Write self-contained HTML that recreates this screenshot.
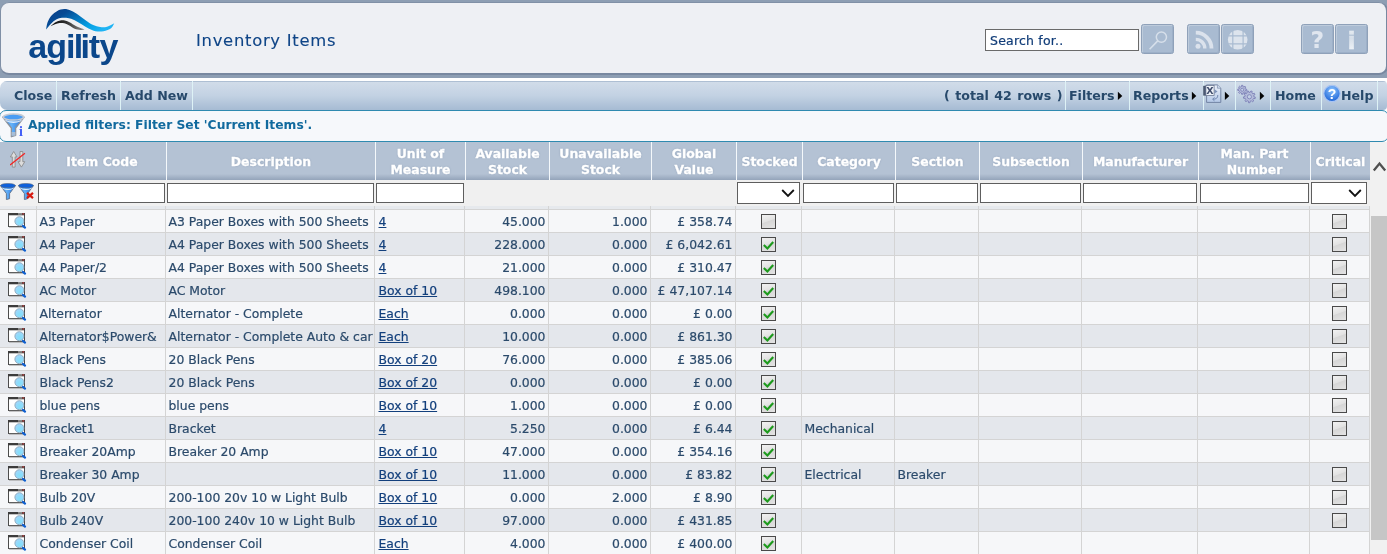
<!DOCTYPE html>
<html><head><meta charset="utf-8"><title>Inventory Items</title>
<style>
*{box-sizing:border-box}
html,body{margin:0;padding:0}
body{width:1387px;height:554px;overflow:hidden;background:#fff;font-family:"DejaVu Sans","Liberation Sans",sans-serif;font-size:12.4px;color:#2b4a6b;position:relative}
#top{position:absolute;left:0;top:0;width:1387px;height:78px;background:#8d9eb3}
#panel{position:absolute;left:0;top:2px;width:1388px;height:73px;background:#eef0f4;border:1px solid #8090a6;border-bottom:2px solid #7888a0;border-right:2px solid #7888a0;border-radius:9px}
#logo{position:absolute;left:0;top:0}
#logotxt{position:absolute;left:28.2px;top:26px;font-family:"Liberation Sans",sans-serif;font-weight:bold;font-size:34px;color:#0b478b;line-height:40px;white-space:nowrap}
#logotxt span{display:inline}
#title{position:absolute;left:196px;top:30px;font-size:16.4px;letter-spacing:.72px;-webkit-text-stroke:.12px currentColor;color:#0f4587;line-height:22px;white-space:nowrap}
#search{position:absolute;left:985px;top:29px;width:154px;height:22px;border:1px solid #6a6a6a;background:#fff;font-size:12.5px;letter-spacing:.2px;-webkit-text-stroke:.2px currentColor;color:#103c78;padding:0 0 0 4px;line-height:21px;white-space:nowrap}
.tb{position:absolute;top:24px;width:33px;height:30px;background:#a9bbd1;border:1px solid #8fa1b9;border-radius:2.5px;box-shadow:inset 1px 1px 0 #bdcbdb,inset -1px -1px 0 #9db0c8}
.tb svg{position:absolute;left:0;top:0}
#bar{position:absolute;left:0;top:81px;width:1387px;height:29px;background:linear-gradient(#aebfd3 0,#aebfd3 1px,#d1dce9 1px,#c3d2e3 50%,#a6bbd3 100%);border-radius:7px 4px 4px 7px;font-weight:bold;font-size:12.6px;color:#27496b}
#bar .t{position:absolute;top:0;height:29px;line-height:29px;white-space:nowrap}
#bar .s{position:absolute;top:0;width:1px;height:29px;background:#def2f6}
#info{position:absolute;left:-1px;top:110px;width:1390px;height:32px;background:#f6f8fb;border:1px solid #2f8ab0;border-radius:7px}
#info .t{position:absolute;left:28px;top:0;line-height:29px;font-weight:bold;font-size:12.3px;color:#116a9e;white-space:nowrap}
#hdr{position:absolute;left:0;top:142px;width:1370px;height:38px;background:linear-gradient(#b4c2d4 0,#b4c2d4 84%,#94a4ba 100%)}
#hdr .h{position:absolute;top:0;height:38px;color:#fff;font-weight:bold;font-size:12.45px;-webkit-text-stroke:.3px #fff;text-align:center;display:flex;align-items:center;justify-content:center;line-height:16px;padding-top:2px;text-shadow:0 0 2px #8a9bb3;border-left:1px solid #f4f8fb}
#flt{position:absolute;left:0;top:180px;width:1370px;height:26px;background:#f0f0f0;z-index:2}
#flt .i{position:absolute;top:3px;height:20px;background:#fff;border:1px solid #5e5e5e}
#flt .sel{top:2px;height:22px}
#flt .sel svg{position:absolute;right:4px;top:5px}
#grid{position:absolute;left:0;top:205px;width:1369px;border-collapse:collapse;table-layout:fixed}
#grid td{-webkit-text-stroke:.2px currentColor;height:23px;padding:2px 0 0 2px;border:1px solid #d4d4d4;white-space:nowrap;overflow:hidden;line-height:20px;vertical-align:middle}
#grid td:first-child{border-left:0}
#grid tr.sp td{height:4px;padding:0;line-height:0;font-size:0;border-top:1px solid #f0f0f0;background:#e6e9ed}
#grid tr.o td{background:#f6f7f9}
#grid tr.e td{background:#e4e7ec}
#grid td.r{text-align:right;padding-right:2px}
#grid td.c{text-align:center;padding:0}
#grid td.c0{padding:0}
#grid td:nth-child(2),#grid td:nth-child(3),#grid td:nth-child(9),#grid td:nth-child(10){padding-left:3px}
#grid td:nth-child(4){padding-left:4px}
#grid a{text-decoration:underline;color:#123f7c}
.vw{display:block;margin:0 0 0 7px}
.cb{display:inline-block;width:15px;height:15px;vertical-align:middle;border:1px solid #4a4a4a;background:linear-gradient(160deg,#f2f2f2 0,#e2e2e2 45%,#d6d6d6 50%,#e4e4e4 100%);position:relative;margin-top:-1px}
.cb svg{position:absolute;left:0;top:0}
#sb{position:absolute;left:1370px;top:142px;width:17px;height:412px;background:#f1f1f1}
#sb .th{position:absolute;left:1px;top:74px;width:16px;height:324px;background:#c6c6c6}
#w{position:absolute;left:0;top:0;width:1387px;height:554px;overflow:hidden;will-change:transform}
</style></head><body><div id="w">
<svg width="0" height="0" style="position:absolute"><defs>
<linearGradient id="fg" x1="0" y1="0" x2="1" y2="0"><stop offset="0" stop-color="#2577e4"/><stop offset=".4" stop-color="#66b2f7"/><stop offset="1" stop-color="#1a69dc"/></linearGradient>
<radialGradient id="mg" cx=".55" cy=".65" r=".7"><stop offset="0" stop-color="#7fe0fb"/><stop offset="1" stop-color="#a6d4fa"/></radialGradient>
</defs></svg>
<div id="top"><div id="panel"></div>
<svg id="logo" width="140" height="76" viewBox="0 0 140 76">
<defs><linearGradient id="lg1" x1="0" y1="0.1" x2="1" y2="0.6"><stop offset="0" stop-color="#0b3f88"/><stop offset=".25" stop-color="#064a94"/><stop offset=".5" stop-color="#0477be"/><stop offset=".75" stop-color="#04a0e4"/><stop offset="1" stop-color="#1fb4f4"/></linearGradient>
<linearGradient id="lg2" x1="0" y1="0" x2="1" y2="0"><stop offset="0" stop-color="#0c0c0c"/><stop offset=".45" stop-color="#2e2e2e"/><stop offset="1" stop-color="#8c8c8c"/></linearGradient></defs>
<path d="M46.07 29.42 C46.31 28.26 46.60 24.80 47.51 22.49 C48.42 20.18 49.92 17.48 51.55 15.55 C53.19 13.63 55.21 12.01 57.33 10.93 C59.45 9.85 61.95 9.13 64.26 9.08 C66.57 9.04 68.89 9.71 71.20 10.64 C73.51 11.58 75.62 13.00 78.13 14.69 C80.63 16.37 83.71 19.02 86.22 20.75 C88.72 22.49 90.84 24.03 93.15 25.09 C95.46 26.15 97.77 26.82 100.08 27.11 C102.39 27.40 104.65 27.45 107.01 26.82 C109.37 26.19 113.03 23.93 114.23 23.35 C113.70 24.17 112.84 26.96 111.06 28.26 C109.28 29.56 106.15 30.67 103.55 31.15 C100.95 31.63 97.96 31.59 95.46 31.15 C92.96 30.72 90.84 29.71 88.53 28.55 C86.22 27.40 83.91 25.62 81.59 24.22 C79.28 22.82 76.97 21.22 74.66 20.18 C72.35 19.14 69.85 18.37 67.73 17.98 C65.61 17.60 63.88 17.60 61.95 17.86 C60.03 18.13 58.01 18.64 56.18 19.60 C54.35 20.56 52.66 22.01 50.98 23.64 C49.29 25.28 46.88 28.46 46.07 29.42 Z" fill="url(#lg1)"/>
<path d="M50.69 26.24 C51.41 25.62 53.43 23.45 55.02 22.49 C56.61 21.52 58.58 20.80 60.22 20.46 C61.86 20.13 63.20 20.13 64.84 20.46 C66.48 20.80 68.21 21.57 70.04 22.49 C71.87 23.40 73.41 24.80 75.82 25.95 C78.22 27.11 83.04 28.84 84.48 29.42 C83.81 29.52 82.08 30.09 80.44 30.00 C78.80 29.90 76.59 29.61 74.66 28.84 C72.74 28.07 70.62 26.29 68.89 25.37 C67.15 24.46 65.80 23.74 64.26 23.35 C62.72 22.97 61.18 22.92 59.64 23.06 C58.10 23.21 56.51 23.69 55.02 24.22 C53.53 24.75 51.41 25.90 50.69 26.24 Z" fill="url(#lg2)"/>
<text x="28.2" y="57.7" dx="0 -0.8 -1.1 -1.65 -2.65 -1.35 -0.6" font-family="Liberation Sans,sans-serif" font-weight="bold" font-size="34" fill="#0b478b">agility</text>
</svg>

<div id="title">Inventory Items</div>
<div id="search">Search for..</div>
<div class="tb" style="left:1141px"><svg width="31" height="28" viewBox="0 0 31 28"><circle cx="19.4" cy="12.1" r="5.1" fill="none" stroke="#d6dfea" stroke-width="1.5"/><line x1="15.7" y1="15.9" x2="7.6" y2="24.2" stroke="#d6dfea" stroke-width="1.6"/></svg></div>
<div class="tb" style="left:1187px"><svg width="31" height="28" viewBox="0 0 31 28"><circle cx="10" cy="21.2" r="2.5" fill="#dbe2ec"/><path d="M7.8 14.4 A9 9 0 0 1 16.8 23.4" fill="none" stroke="#dbe2ec" stroke-width="3.4"/><path d="M7.8 7.7 A15.7 15.7 0 0 1 23.5 23.4" fill="none" stroke="#dbe2ec" stroke-width="3.8"/></svg></div>
<div class="tb" style="left:1221px"><svg width="31" height="28" viewBox="0 0 31 28"><circle cx="15.7" cy="14.8" r="9.8" fill="#dde4ed"/><path d="M5 10.9 H27 M5 18.9 H27 M10.8 4 V26 M21.1 4 V26" stroke="#a9bbd1" stroke-width="1.2" fill="none"/></svg></div>
<div class="tb" style="left:1301px"><svg width="31" height="28" viewBox="0 0 31 28"><text x="15.4" y="23.3" text-anchor="middle" font-family="DejaVu Sans,Liberation Sans,sans-serif" font-weight="bold" font-size="23.5" fill="#e0e6ef">?</text></svg></div>
<div class="tb" style="left:1335px"><svg width="31" height="28" viewBox="0 0 31 28"><defs><linearGradient id="ig" x1="0" y1="0" x2="0" y2="1"><stop offset="0" stop-color="#eaeff4"/><stop offset=".4" stop-color="#d6dfe9"/><stop offset="1" stop-color="#f8fafc"/></linearGradient></defs><text x="15.65" y="24.1" text-anchor="middle" font-family="DejaVu Sans,Liberation Sans,sans-serif" font-weight="bold" font-size="23.6" stroke="url(#ig)" stroke-width=".5" fill="url(#ig)">i</text></svg></div>
</div>
<div id="bar">
<div class="t" style="left:14px">Close</div><div class="s" style="left:56px"></div>
<div class="t" style="left:61px">Refresh</div><div class="s" style="left:120px"></div>
<div class="t" style="left:125px">Add New</div><div class="s" style="left:192px"></div>
<div class="t" style="left:944px;word-spacing:1.1px">( total 42 rows )</div><div class="s" style="left:1065px"></div>
<div class="t" style="left:1069px">Filters</div><svg style="position:absolute;left:1117px;top:10px" width="6" height="10" viewBox="0 0 6 10"><path d="M0.9 0.8 L5.3 4.9 L0.9 9 Z" fill="#050505"/></svg><div class="s" style="left:1129px"></div>
<div class="t" style="left:1133px">Reports</div><svg style="position:absolute;left:1191px;top:10px" width="6" height="10" viewBox="0 0 6 10"><path d="M0.9 0.8 L5.3 4.9 L0.9 9 Z" fill="#050505"/></svg><div class="s" style="left:1203px"></div>
<svg style="position:absolute;left:1203px;top:3px" width="20" height="20" viewBox="0 0 20 20"><defs><linearGradient id="xg" x1="0" y1="0" x2="0" y2="1"><stop offset="0" stop-color="#edf2fa"/><stop offset="1" stop-color="#b3c7e6"/></linearGradient></defs><path d="M3.6 0.9 H14.4 L17.8 4.2 V18.4 H3.6 Z" fill="url(#xg)" stroke="#6b7c9c" stroke-width=".9"/><path d="M14.4 0.9 V4.2 H17.8" fill="#cfdbee" stroke="#6b7c9c" stroke-width=".6"/><path d="M11.5 5.2 L14.6 7.4 L11.5 9.6 Z" fill="#7f94ba"/><path d="M14.8 11 C15 14 13 15.3 10 15.2 M11.5 13.5 L9.6 15.2 L11.5 16.9" fill="none" stroke="#7389b2" stroke-width="1"/><rect x="0.2" y="1.8" width="2.8" height="9.8" fill="#4c5972"/><rect x="2.9" y="1.6" width="8.2" height="10" fill="#eef2f8" stroke="#5d6b87" stroke-width=".7"/><text x="7" y="10.2" text-anchor="middle" font-family="DejaVu Sans,Liberation Sans,sans-serif" font-weight="bold" font-size="9.5" fill="#3f4c6b">X</text></svg><svg style="position:absolute;left:1224px;top:10px" width="6" height="10" viewBox="0 0 6 10"><path d="M0.9 0.8 L5.3 4.9 L0.9 9 Z" fill="#050505"/></svg>
<div class="s" style="left:1235px"></div>
<svg style="position:absolute;left:1236px;top:3px" width="22" height="22" viewBox="0 0 22 22"><path d="M9.42 5.08 L10.66 5.20 L10.66 6.40 L9.42 6.52 L8.99 7.57 L9.78 8.53 L8.93 9.38 L7.97 8.59 L6.92 9.02 L6.80 10.26 L5.60 10.26 L5.48 9.02 L4.43 8.59 L3.47 9.38 L2.62 8.53 L3.41 7.57 L2.98 6.52 L1.74 6.40 L1.74 5.20 L2.98 5.08 L3.41 4.03 L2.62 3.07 L3.47 2.22 L4.43 3.01 L5.48 2.58 L5.60 1.34 L6.80 1.34 L6.92 2.58 L7.97 3.01 L8.93 2.22 L9.78 3.07 L8.99 4.03 Z" fill="#b4bcda" stroke="#7a7eb6" stroke-width=".9" stroke-linejoin="round"/><circle cx="6.2" cy="5.8" r="1.5" fill="#c6d3e6" stroke="#7a7eb6" stroke-width=".8"/><path d="M17.90 12.77 L19.38 13.24 L19.10 14.63 L17.55 14.48 L16.83 15.66 L17.67 16.97 L16.56 17.85 L15.47 16.75 L14.16 17.19 L13.96 18.72 L12.54 18.69 L12.41 17.14 L11.13 16.64 L9.99 17.69 L8.92 16.74 L9.82 15.48 L9.16 14.27 L7.61 14.34 L7.40 12.93 L8.90 12.54 L9.18 11.19 L7.95 10.25 L8.69 9.03 L10.09 9.70 L11.17 8.84 L10.83 7.33 L12.18 6.88 L12.83 8.29 L14.20 8.32 L14.92 6.95 L16.24 7.47 L15.83 8.96 L16.86 9.87 L18.29 9.28 L18.97 10.53 L17.70 11.41 Z" fill="#b4bcda" stroke="#7a7eb6" stroke-width=".9" stroke-linejoin="round"/><circle cx="13.4" cy="12.75" r="2.1" fill="#c2d0e4" stroke="#7a7eb6" stroke-width=".8"/></svg><svg style="position:absolute;left:1259px;top:10px" width="6" height="10" viewBox="0 0 6 10"><path d="M0.9 0.8 L5.3 4.9 L0.9 9 Z" fill="#050505"/></svg>
<div class="s" style="left:1270px"></div>
<div class="t" style="left:1275px">Home</div><div class="s" style="left:1321px"></div>
<svg style="position:absolute;left:1323px;top:3px" width="18" height="19" viewBox="0 0 18 19"><defs><radialGradient id="hg" cx=".5" cy=".3" r=".7"><stop offset="0" stop-color="#8cc4ff"/><stop offset="1" stop-color="#1a62d6"/></radialGradient></defs><circle cx="9" cy="9.5" r="8.2" fill="url(#hg)" stroke="#a9c4f2" stroke-width="1.2"/><text x="9" y="14.5" text-anchor="middle" font-family="Liberation Sans,sans-serif" font-weight="bold" font-size="14" fill="#fff">?</text></svg>
<div class="t" style="left:1341px">Help</div><div class="s" style="left:1377px"></div>
</div>
<div id="info"><svg style="position:absolute;left:1.5px;top:2px" width="23" height="24.5" viewBox="0 0 16 17"><path d="M0.5 2.8 L15.4 2.8 L9.5 10.4 L9.5 15.5 L6.5 16.5 L6.5 10.4 Z" fill="url(#fg)" stroke="#8b929c" stroke-width=".9" stroke-linejoin="round"/><ellipse cx="7.95" cy="2.8" rx="7.1" ry="2.1" fill="#4a9df3" stroke="#c4cad3" stroke-width="1.1"/><path d="M2 4.6 Q7.95 7.2 13.9 4.6 L13.1 5.8 Q7.95 8 2.8 5.8 Z" fill="#eef5fd" opacity=".9"/><rect x="6.6" y="13.2" width="2.8" height="2.6" fill="#b9c4d2" opacity=".8"/></svg><div style="position:absolute;left:19px;top:14px;font-family:'Liberation Serif',serif;font-weight:bold;font-size:14px;color:#4460f6;line-height:13px">i</div><div class="t">Applied filters: Filter Set 'Current Items'.</div></div>
<div id="hdr">
<div class="h" style="left:0;width:37px;border-left:0;padding-top:0"><svg style="position:absolute;left:10px;top:9px" width="16" height="17" viewBox="0 0 16 17"><path d="M3.7 0.5 L7 5.9 H5.1 V16.1 H2.3 V5.9 H0.4 Z" fill="#dcdcdc" stroke="#858585" stroke-width=".8" stroke-linejoin="round"/><path d="M11.4 16.1 L14.8 10.7 H12.8 V0.5 H10 V10.7 H8 Z" fill="#dcdcdc" stroke="#858585" stroke-width=".8" stroke-linejoin="round"/><line x1="0.1" y1="14.1" x2="14.9" y2="2.2" stroke="#f22424" stroke-width="1.3"/></svg></div>
<div class="h" style="left:37px;width:129px">Item Code</div>
<div class="h" style="left:166px;width:209px">Description</div>
<div class="h" style="left:375px;width:90px">Unit of<br>Measure</div>
<div class="h" style="left:465px;width:84px">Available<br>Stock</div>
<div class="h" style="left:549px;width:102px">Unavailable<br>Stock</div>
<div class="h" style="left:651px;width:85px">Global<br>Value</div>
<div class="h" style="left:736px;width:66px">Stocked</div>
<div class="h" style="left:802px;width:93px">Category</div>
<div class="h" style="left:895px;width:84px">Section</div>
<div class="h" style="left:979px;width:103px">Subsection</div>
<div class="h" style="left:1082px;width:116px">Manufacturer</div>
<div class="h" style="left:1198px;width:112px">Man. Part<br>Number</div>
<div class="h" style="left:1310px;width:60px">Critical</div>
</div>
<div id="flt">
<svg style="position:absolute;left:0;top:3px" width="16" height="17" viewBox="0 0 16 17"><path d="M0.4 2.6 L15.5 2.6 L9.6 10.6 L9.6 15.7 L6.4 16.6 L6.4 10.6 Z" fill="url(#fg)" stroke="#56657c" stroke-width=".8" stroke-linejoin="round"/><ellipse cx="7.95" cy="2.6" rx="7.3" ry="2.2" fill="#0e60db" stroke="#56657c" stroke-width=".6"/><path d="M1.7 4.4 Q7.95 7.4 14.2 4.4 L13.3 5.8 Q7.95 8.3 2.6 5.8 Z" fill="#eaf3fd" opacity=".92"/></svg><svg style="position:absolute;left:18.4px;top:3px" width="16" height="17" viewBox="0 0 16 17"><path d="M0.4 2.6 L15.5 2.6 L9.6 10.6 L9.6 15.7 L6.4 16.6 L6.4 10.6 Z" fill="url(#fg)" stroke="#56657c" stroke-width=".8" stroke-linejoin="round"/><ellipse cx="7.95" cy="2.6" rx="7.3" ry="2.2" fill="#0e60db" stroke="#56657c" stroke-width=".6"/><path d="M1.7 4.4 Q7.95 7.4 14.2 4.4 L13.3 5.8 Q7.95 8.3 2.6 5.8 Z" fill="#eaf3fd" opacity=".92"/></svg>
<svg style="position:absolute;left:26px;top:11.5px" width="8" height="7" viewBox="0 0 8 7"><path d="M1 0.9 L7 6.1 M7 0.9 L1 6.1" stroke="#d81a10" stroke-width="2.2"/></svg>
<div class="i" style="left:38px;width:127px"></div>
<div class="i" style="left:167px;width:207px"></div>
<div class="i" style="left:376px;width:88px"></div>
<div class="i sel" style="left:737px;width:63px"><svg width="14" height="10" viewBox="0 0 14 10"><path d="M1.2 2 L7 8 L12.8 2" fill="none" stroke="#111" stroke-width="1.8"/></svg></div>
<div class="i" style="left:803px;width:91px"></div>
<div class="i" style="left:896px;width:82px"></div>
<div class="i" style="left:980px;width:101px"></div>
<div class="i" style="left:1083px;width:114px"></div>
<div class="i" style="left:1200px;width:109px"></div>
<div class="i sel" style="left:1311px;width:56px"><svg width="14" height="10" viewBox="0 0 14 10"><path d="M1.2 2 L7 8 L12.8 2" fill="none" stroke="#111" stroke-width="1.8"/></svg></div>
</div>
<table id="grid"><colgroup><col style="width:36px"><col style="width:129px"><col style="width:209px"><col style="width:90px"><col style="width:84px"><col style="width:102px"><col style="width:85px"><col style="width:66px"><col style="width:93px"><col style="width:84px"><col style="width:103px"><col style="width:116px"><col style="width:112px"><col style="width:60px"></colgroup>
<tr class="sp"><td></td><td></td><td></td><td></td><td></td><td></td><td></td><td></td><td></td><td></td><td></td><td></td><td></td><td></td></tr>
<tr class="o"><td class="c0"><svg class="vw" width="20" height="18" viewBox="0 0 20 18"><rect x="1.5" y="1.5" width="16" height="13" fill="#fff" stroke="#4c4c4c" stroke-width="1"/><rect x="1" y="1" width="17" height="2.3" fill="#3c3c3c"/><rect x="11" y="1" width="4" height="1.8" fill="#8a8a8a"/><rect x="15.4" y="1" width="1.8" height="1.8" fill="#a04848"/><path d="M2 15.2 H18" stroke="#9a9a9a" stroke-width=".8"/><circle cx="12.4" cy="9.2" r="4.5" fill="url(#mg)" stroke="#8fa6b8" stroke-width=".9"/><line x1="15.9" y1="13.9" x2="18" y2="15.6" stroke="#0f5fcf" stroke-width="2.3" stroke-linecap="round"/></svg></td><td>A3 Paper</td><td>A3 Paper Boxes with 500 Sheets</td><td><a>4</a></td><td class="r">45.000</td><td class="r">1.000</td><td class="r">£ 358.74</td><td class="c"><span class="cb"></span></td><td></td><td></td><td></td><td></td><td></td><td class="c"><span class="cb"></span></td></tr>
<tr class="e"><td class="c0"><svg class="vw" width="20" height="18" viewBox="0 0 20 18"><rect x="1.5" y="1.5" width="16" height="13" fill="#fff" stroke="#4c4c4c" stroke-width="1"/><rect x="1" y="1" width="17" height="2.3" fill="#3c3c3c"/><rect x="11" y="1" width="4" height="1.8" fill="#8a8a8a"/><rect x="15.4" y="1" width="1.8" height="1.8" fill="#a04848"/><path d="M2 15.2 H18" stroke="#9a9a9a" stroke-width=".8"/><circle cx="12.4" cy="9.2" r="4.5" fill="url(#mg)" stroke="#8fa6b8" stroke-width=".9"/><line x1="15.9" y1="13.9" x2="18" y2="15.6" stroke="#0f5fcf" stroke-width="2.3" stroke-linecap="round"/></svg></td><td>A4 Paper</td><td>A4 Paper Boxes with 500 Sheets</td><td><a>4</a></td><td class="r">228.000</td><td class="r">0.000</td><td class="r">£ 6,042.61</td><td class="c"><span class="cb"><svg width="13" height="13" viewBox="0 0 13 13"><path d="M1.8 7 L5.4 10.4 L11.2 4" fill="none" stroke="#1c9a1c" stroke-width="2.1"/></svg></span></td><td></td><td></td><td></td><td></td><td></td><td class="c"><span class="cb"></span></td></tr>
<tr class="o"><td class="c0"><svg class="vw" width="20" height="18" viewBox="0 0 20 18"><rect x="1.5" y="1.5" width="16" height="13" fill="#fff" stroke="#4c4c4c" stroke-width="1"/><rect x="1" y="1" width="17" height="2.3" fill="#3c3c3c"/><rect x="11" y="1" width="4" height="1.8" fill="#8a8a8a"/><rect x="15.4" y="1" width="1.8" height="1.8" fill="#a04848"/><path d="M2 15.2 H18" stroke="#9a9a9a" stroke-width=".8"/><circle cx="12.4" cy="9.2" r="4.5" fill="url(#mg)" stroke="#8fa6b8" stroke-width=".9"/><line x1="15.9" y1="13.9" x2="18" y2="15.6" stroke="#0f5fcf" stroke-width="2.3" stroke-linecap="round"/></svg></td><td>A4 Paper/2</td><td>A4 Paper Boxes with 500 Sheets</td><td><a>4</a></td><td class="r">21.000</td><td class="r">0.000</td><td class="r">£ 310.47</td><td class="c"><span class="cb"><svg width="13" height="13" viewBox="0 0 13 13"><path d="M1.8 7 L5.4 10.4 L11.2 4" fill="none" stroke="#1c9a1c" stroke-width="2.1"/></svg></span></td><td></td><td></td><td></td><td></td><td></td><td class="c"><span class="cb"></span></td></tr>
<tr class="e"><td class="c0"><svg class="vw" width="20" height="18" viewBox="0 0 20 18"><rect x="1.5" y="1.5" width="16" height="13" fill="#fff" stroke="#4c4c4c" stroke-width="1"/><rect x="1" y="1" width="17" height="2.3" fill="#3c3c3c"/><rect x="11" y="1" width="4" height="1.8" fill="#8a8a8a"/><rect x="15.4" y="1" width="1.8" height="1.8" fill="#a04848"/><path d="M2 15.2 H18" stroke="#9a9a9a" stroke-width=".8"/><circle cx="12.4" cy="9.2" r="4.5" fill="url(#mg)" stroke="#8fa6b8" stroke-width=".9"/><line x1="15.9" y1="13.9" x2="18" y2="15.6" stroke="#0f5fcf" stroke-width="2.3" stroke-linecap="round"/></svg></td><td>AC Motor</td><td>AC Motor</td><td><a>Box of 10</a></td><td class="r">498.100</td><td class="r">0.000</td><td class="r">£ 47,107.14</td><td class="c"><span class="cb"><svg width="13" height="13" viewBox="0 0 13 13"><path d="M1.8 7 L5.4 10.4 L11.2 4" fill="none" stroke="#1c9a1c" stroke-width="2.1"/></svg></span></td><td></td><td></td><td></td><td></td><td></td><td class="c"><span class="cb"></span></td></tr>
<tr class="o"><td class="c0"><svg class="vw" width="20" height="18" viewBox="0 0 20 18"><rect x="1.5" y="1.5" width="16" height="13" fill="#fff" stroke="#4c4c4c" stroke-width="1"/><rect x="1" y="1" width="17" height="2.3" fill="#3c3c3c"/><rect x="11" y="1" width="4" height="1.8" fill="#8a8a8a"/><rect x="15.4" y="1" width="1.8" height="1.8" fill="#a04848"/><path d="M2 15.2 H18" stroke="#9a9a9a" stroke-width=".8"/><circle cx="12.4" cy="9.2" r="4.5" fill="url(#mg)" stroke="#8fa6b8" stroke-width=".9"/><line x1="15.9" y1="13.9" x2="18" y2="15.6" stroke="#0f5fcf" stroke-width="2.3" stroke-linecap="round"/></svg></td><td>Alternator</td><td>Alternator - Complete</td><td><a>Each</a></td><td class="r">0.000</td><td class="r">0.000</td><td class="r">£ 0.00</td><td class="c"><span class="cb"><svg width="13" height="13" viewBox="0 0 13 13"><path d="M1.8 7 L5.4 10.4 L11.2 4" fill="none" stroke="#1c9a1c" stroke-width="2.1"/></svg></span></td><td></td><td></td><td></td><td></td><td></td><td class="c"><span class="cb"></span></td></tr>
<tr class="e"><td class="c0"><svg class="vw" width="20" height="18" viewBox="0 0 20 18"><rect x="1.5" y="1.5" width="16" height="13" fill="#fff" stroke="#4c4c4c" stroke-width="1"/><rect x="1" y="1" width="17" height="2.3" fill="#3c3c3c"/><rect x="11" y="1" width="4" height="1.8" fill="#8a8a8a"/><rect x="15.4" y="1" width="1.8" height="1.8" fill="#a04848"/><path d="M2 15.2 H18" stroke="#9a9a9a" stroke-width=".8"/><circle cx="12.4" cy="9.2" r="4.5" fill="url(#mg)" stroke="#8fa6b8" stroke-width=".9"/><line x1="15.9" y1="13.9" x2="18" y2="15.6" stroke="#0f5fcf" stroke-width="2.3" stroke-linecap="round"/></svg></td><td>Alternator$Power&amp;</td><td>Alternator - Complete Auto &amp; car</td><td><a>Each</a></td><td class="r">10.000</td><td class="r">0.000</td><td class="r">£ 861.30</td><td class="c"><span class="cb"><svg width="13" height="13" viewBox="0 0 13 13"><path d="M1.8 7 L5.4 10.4 L11.2 4" fill="none" stroke="#1c9a1c" stroke-width="2.1"/></svg></span></td><td></td><td></td><td></td><td></td><td></td><td class="c"><span class="cb"></span></td></tr>
<tr class="o"><td class="c0"><svg class="vw" width="20" height="18" viewBox="0 0 20 18"><rect x="1.5" y="1.5" width="16" height="13" fill="#fff" stroke="#4c4c4c" stroke-width="1"/><rect x="1" y="1" width="17" height="2.3" fill="#3c3c3c"/><rect x="11" y="1" width="4" height="1.8" fill="#8a8a8a"/><rect x="15.4" y="1" width="1.8" height="1.8" fill="#a04848"/><path d="M2 15.2 H18" stroke="#9a9a9a" stroke-width=".8"/><circle cx="12.4" cy="9.2" r="4.5" fill="url(#mg)" stroke="#8fa6b8" stroke-width=".9"/><line x1="15.9" y1="13.9" x2="18" y2="15.6" stroke="#0f5fcf" stroke-width="2.3" stroke-linecap="round"/></svg></td><td>Black Pens</td><td>20 Black Pens</td><td><a>Box of 20</a></td><td class="r">76.000</td><td class="r">0.000</td><td class="r">£ 385.06</td><td class="c"><span class="cb"><svg width="13" height="13" viewBox="0 0 13 13"><path d="M1.8 7 L5.4 10.4 L11.2 4" fill="none" stroke="#1c9a1c" stroke-width="2.1"/></svg></span></td><td></td><td></td><td></td><td></td><td></td><td class="c"><span class="cb"></span></td></tr>
<tr class="e"><td class="c0"><svg class="vw" width="20" height="18" viewBox="0 0 20 18"><rect x="1.5" y="1.5" width="16" height="13" fill="#fff" stroke="#4c4c4c" stroke-width="1"/><rect x="1" y="1" width="17" height="2.3" fill="#3c3c3c"/><rect x="11" y="1" width="4" height="1.8" fill="#8a8a8a"/><rect x="15.4" y="1" width="1.8" height="1.8" fill="#a04848"/><path d="M2 15.2 H18" stroke="#9a9a9a" stroke-width=".8"/><circle cx="12.4" cy="9.2" r="4.5" fill="url(#mg)" stroke="#8fa6b8" stroke-width=".9"/><line x1="15.9" y1="13.9" x2="18" y2="15.6" stroke="#0f5fcf" stroke-width="2.3" stroke-linecap="round"/></svg></td><td>Black Pens2</td><td>20 Black Pens</td><td><a>Box of 20</a></td><td class="r">0.000</td><td class="r">0.000</td><td class="r">£ 0.00</td><td class="c"><span class="cb"><svg width="13" height="13" viewBox="0 0 13 13"><path d="M1.8 7 L5.4 10.4 L11.2 4" fill="none" stroke="#1c9a1c" stroke-width="2.1"/></svg></span></td><td></td><td></td><td></td><td></td><td></td><td class="c"><span class="cb"></span></td></tr>
<tr class="o"><td class="c0"><svg class="vw" width="20" height="18" viewBox="0 0 20 18"><rect x="1.5" y="1.5" width="16" height="13" fill="#fff" stroke="#4c4c4c" stroke-width="1"/><rect x="1" y="1" width="17" height="2.3" fill="#3c3c3c"/><rect x="11" y="1" width="4" height="1.8" fill="#8a8a8a"/><rect x="15.4" y="1" width="1.8" height="1.8" fill="#a04848"/><path d="M2 15.2 H18" stroke="#9a9a9a" stroke-width=".8"/><circle cx="12.4" cy="9.2" r="4.5" fill="url(#mg)" stroke="#8fa6b8" stroke-width=".9"/><line x1="15.9" y1="13.9" x2="18" y2="15.6" stroke="#0f5fcf" stroke-width="2.3" stroke-linecap="round"/></svg></td><td>blue pens</td><td>blue pens</td><td><a>Box of 10</a></td><td class="r">1.000</td><td class="r">0.000</td><td class="r">£ 0.00</td><td class="c"><span class="cb"><svg width="13" height="13" viewBox="0 0 13 13"><path d="M1.8 7 L5.4 10.4 L11.2 4" fill="none" stroke="#1c9a1c" stroke-width="2.1"/></svg></span></td><td></td><td></td><td></td><td></td><td></td><td class="c"><span class="cb"></span></td></tr>
<tr class="e"><td class="c0"><svg class="vw" width="20" height="18" viewBox="0 0 20 18"><rect x="1.5" y="1.5" width="16" height="13" fill="#fff" stroke="#4c4c4c" stroke-width="1"/><rect x="1" y="1" width="17" height="2.3" fill="#3c3c3c"/><rect x="11" y="1" width="4" height="1.8" fill="#8a8a8a"/><rect x="15.4" y="1" width="1.8" height="1.8" fill="#a04848"/><path d="M2 15.2 H18" stroke="#9a9a9a" stroke-width=".8"/><circle cx="12.4" cy="9.2" r="4.5" fill="url(#mg)" stroke="#8fa6b8" stroke-width=".9"/><line x1="15.9" y1="13.9" x2="18" y2="15.6" stroke="#0f5fcf" stroke-width="2.3" stroke-linecap="round"/></svg></td><td>Bracket1</td><td>Bracket</td><td><a>4</a></td><td class="r">5.250</td><td class="r">0.000</td><td class="r">£ 6.44</td><td class="c"><span class="cb"><svg width="13" height="13" viewBox="0 0 13 13"><path d="M1.8 7 L5.4 10.4 L11.2 4" fill="none" stroke="#1c9a1c" stroke-width="2.1"/></svg></span></td><td>Mechanical</td><td></td><td></td><td></td><td></td><td class="c"><span class="cb"></span></td></tr>
<tr class="o"><td class="c0"><svg class="vw" width="20" height="18" viewBox="0 0 20 18"><rect x="1.5" y="1.5" width="16" height="13" fill="#fff" stroke="#4c4c4c" stroke-width="1"/><rect x="1" y="1" width="17" height="2.3" fill="#3c3c3c"/><rect x="11" y="1" width="4" height="1.8" fill="#8a8a8a"/><rect x="15.4" y="1" width="1.8" height="1.8" fill="#a04848"/><path d="M2 15.2 H18" stroke="#9a9a9a" stroke-width=".8"/><circle cx="12.4" cy="9.2" r="4.5" fill="url(#mg)" stroke="#8fa6b8" stroke-width=".9"/><line x1="15.9" y1="13.9" x2="18" y2="15.6" stroke="#0f5fcf" stroke-width="2.3" stroke-linecap="round"/></svg></td><td>Breaker 20Amp</td><td>Breaker 20 Amp</td><td><a>Box of 10</a></td><td class="r">47.000</td><td class="r">0.000</td><td class="r">£ 354.16</td><td class="c"><span class="cb"><svg width="13" height="13" viewBox="0 0 13 13"><path d="M1.8 7 L5.4 10.4 L11.2 4" fill="none" stroke="#1c9a1c" stroke-width="2.1"/></svg></span></td><td></td><td></td><td></td><td></td><td></td><td class="c"></td></tr>
<tr class="e"><td class="c0"><svg class="vw" width="20" height="18" viewBox="0 0 20 18"><rect x="1.5" y="1.5" width="16" height="13" fill="#fff" stroke="#4c4c4c" stroke-width="1"/><rect x="1" y="1" width="17" height="2.3" fill="#3c3c3c"/><rect x="11" y="1" width="4" height="1.8" fill="#8a8a8a"/><rect x="15.4" y="1" width="1.8" height="1.8" fill="#a04848"/><path d="M2 15.2 H18" stroke="#9a9a9a" stroke-width=".8"/><circle cx="12.4" cy="9.2" r="4.5" fill="url(#mg)" stroke="#8fa6b8" stroke-width=".9"/><line x1="15.9" y1="13.9" x2="18" y2="15.6" stroke="#0f5fcf" stroke-width="2.3" stroke-linecap="round"/></svg></td><td>Breaker 30 Amp</td><td></td><td><a>Box of 10</a></td><td class="r">11.000</td><td class="r">0.000</td><td class="r">£ 83.82</td><td class="c"><span class="cb"><svg width="13" height="13" viewBox="0 0 13 13"><path d="M1.8 7 L5.4 10.4 L11.2 4" fill="none" stroke="#1c9a1c" stroke-width="2.1"/></svg></span></td><td>Electrical</td><td>Breaker</td><td></td><td></td><td></td><td class="c"><span class="cb"></span></td></tr>
<tr class="o"><td class="c0"><svg class="vw" width="20" height="18" viewBox="0 0 20 18"><rect x="1.5" y="1.5" width="16" height="13" fill="#fff" stroke="#4c4c4c" stroke-width="1"/><rect x="1" y="1" width="17" height="2.3" fill="#3c3c3c"/><rect x="11" y="1" width="4" height="1.8" fill="#8a8a8a"/><rect x="15.4" y="1" width="1.8" height="1.8" fill="#a04848"/><path d="M2 15.2 H18" stroke="#9a9a9a" stroke-width=".8"/><circle cx="12.4" cy="9.2" r="4.5" fill="url(#mg)" stroke="#8fa6b8" stroke-width=".9"/><line x1="15.9" y1="13.9" x2="18" y2="15.6" stroke="#0f5fcf" stroke-width="2.3" stroke-linecap="round"/></svg></td><td>Bulb 20V</td><td>200-100 20v 10 w Light Bulb</td><td><a>Box of 10</a></td><td class="r">0.000</td><td class="r">2.000</td><td class="r">£ 8.90</td><td class="c"><span class="cb"><svg width="13" height="13" viewBox="0 0 13 13"><path d="M1.8 7 L5.4 10.4 L11.2 4" fill="none" stroke="#1c9a1c" stroke-width="2.1"/></svg></span></td><td></td><td></td><td></td><td></td><td></td><td class="c"><span class="cb"></span></td></tr>
<tr class="e"><td class="c0"><svg class="vw" width="20" height="18" viewBox="0 0 20 18"><rect x="1.5" y="1.5" width="16" height="13" fill="#fff" stroke="#4c4c4c" stroke-width="1"/><rect x="1" y="1" width="17" height="2.3" fill="#3c3c3c"/><rect x="11" y="1" width="4" height="1.8" fill="#8a8a8a"/><rect x="15.4" y="1" width="1.8" height="1.8" fill="#a04848"/><path d="M2 15.2 H18" stroke="#9a9a9a" stroke-width=".8"/><circle cx="12.4" cy="9.2" r="4.5" fill="url(#mg)" stroke="#8fa6b8" stroke-width=".9"/><line x1="15.9" y1="13.9" x2="18" y2="15.6" stroke="#0f5fcf" stroke-width="2.3" stroke-linecap="round"/></svg></td><td>Bulb 240V</td><td>200-100 240v 10 w Light Bulb</td><td><a>Box of 10</a></td><td class="r">97.000</td><td class="r">0.000</td><td class="r">£ 431.85</td><td class="c"><span class="cb"><svg width="13" height="13" viewBox="0 0 13 13"><path d="M1.8 7 L5.4 10.4 L11.2 4" fill="none" stroke="#1c9a1c" stroke-width="2.1"/></svg></span></td><td></td><td></td><td></td><td></td><td></td><td class="c"><span class="cb"></span></td></tr>
<tr class="o"><td class="c0"><svg class="vw" width="20" height="18" viewBox="0 0 20 18"><rect x="1.5" y="1.5" width="16" height="13" fill="#fff" stroke="#4c4c4c" stroke-width="1"/><rect x="1" y="1" width="17" height="2.3" fill="#3c3c3c"/><rect x="11" y="1" width="4" height="1.8" fill="#8a8a8a"/><rect x="15.4" y="1" width="1.8" height="1.8" fill="#a04848"/><path d="M2 15.2 H18" stroke="#9a9a9a" stroke-width=".8"/><circle cx="12.4" cy="9.2" r="4.5" fill="url(#mg)" stroke="#8fa6b8" stroke-width=".9"/><line x1="15.9" y1="13.9" x2="18" y2="15.6" stroke="#0f5fcf" stroke-width="2.3" stroke-linecap="round"/></svg></td><td>Condenser Coil</td><td>Condenser Coil</td><td><a>Each</a></td><td class="r">4.000</td><td class="r">0.000</td><td class="r">£ 400.00</td><td class="c"><span class="cb"><svg width="13" height="13" viewBox="0 0 13 13"><path d="M1.8 7 L5.4 10.4 L11.2 4" fill="none" stroke="#1c9a1c" stroke-width="2.1"/></svg></span></td><td></td><td></td><td></td><td></td><td></td><td class="c"></td></tr>
</table>
<div id="sb"><div class="th"></div><svg style="position:absolute;left:2px;top:18px" width="16" height="14" viewBox="0 0 16 14"><path d="M1.8 10.6 L7.5 3.6 L13.2 10.6" fill="none" stroke="#505050" stroke-width="2.3"/></svg></div>
</div></body></html>
